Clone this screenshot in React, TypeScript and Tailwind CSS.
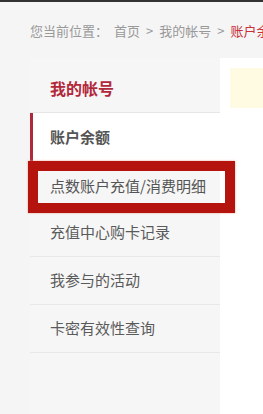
import React from "react";

const font = { fontFamily: '"Noto Sans CJK SC", "Noto Sans", sans-serif' };

export default function App() {
  const items = ["充值中心购卡记录", "我参与的活动", "卡密有效性查询"];
  return (
    <div
      className="w-[263px] h-[414px] bg-[#f5f5f5] border-t-2 border-[#333] overflow-hidden flex flex-col"
      style={font}
    >
      <div className="h-[56px] pt-[19px] pl-[30px] whitespace-nowrap overflow-hidden text-[13px] leading-[20px] text-[#999]">
        您当前位置：<span className="ml-[6px]">首页</span>
        <span className="mx-[6px]">&gt;</span>我的帐号
        <span className="mx-[6px]">&gt;</span>
        <span className="text-[#c8303a]">账户余额</span>
      </div>
      <div className="flex flex-1 pl-[30px]">
        <div className="w-[190px] bg-[#f6f6f6] flex flex-col">
          <div className="h-[55px] pt-[6px] flex items-center pl-[20px] border-b border-[#e6e6e6] text-[16px] font-bold text-[#b2283b]">
            我的帐号
          </div>
          <div className="h-[48px] flex items-center bg-white border-l-[3px] border-[#b0283c] pl-[17px] text-[15px] font-bold text-[#555]">
            账户余额
          </div>
          <div className="relative h-[48px] flex items-center pl-[20px] pt-[3px] text-[15px] text-[#555]">
            点数账户充值/消费明细
            <div className="absolute left-[-2px] top-0 w-[207px] h-[52px] border-[10px] border-[#b5140e] shadow-[0_0_2px_#e9a090]" />
          </div>
          {items.map((t) => (
            <div
              key={t}
              className="h-[48px] flex items-center pl-[20px] border-b border-[#e8e8e8] text-[15px] text-[#5a5a5a]"
            >
              {t}
            </div>
          ))}
        </div>
        <div className="flex-1 bg-white pt-[10px] pl-[10px]">
          <div className="h-[40px] bg-[#fffbe3]" />
        </div>
      </div>
    </div>
  );
}
